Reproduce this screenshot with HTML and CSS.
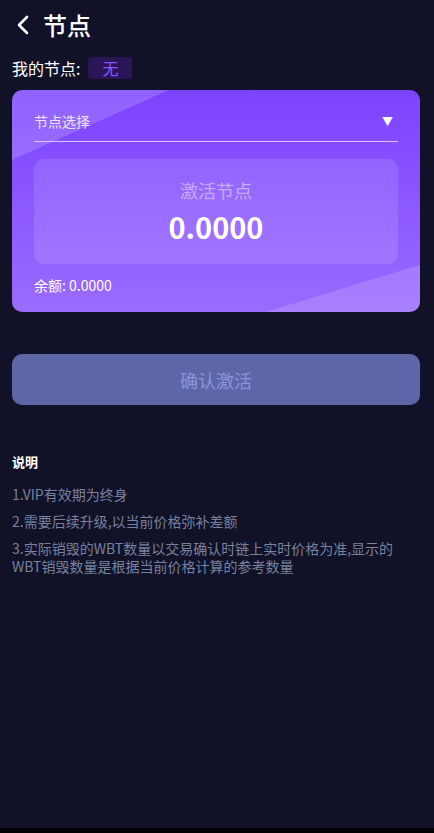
FILE: index.html
```html
<!DOCTYPE html>
<html lang="zh-CN">
<head>
    <meta charset="UTF-8">
    <meta name="viewport" content="width=device-width, initial-scale=1.0">
    <title>节点</title>
    <link rel="stylesheet" href="styles.css">
</head>
<body>
    <div class="page">
        <div class="header">
            <svg class="back" width="14" height="20" viewBox="0 0 14 20">
                <path d="M11 2 L3 10 L11 18" fill="none" stroke="#fff" stroke-width="2.6" stroke-linecap="round" stroke-linejoin="round"/>
            </svg>
            <h1>节点</h1>
        </div>

        <div class="my-node">
            <span>我的节点:</span>
            <span class="badge">无</span>
        </div>

        <div class="card">
            <div class="select">
                <span>节点选择</span>
                <span class="arrow">▼</span>
            </div>
            <div class="amount-box">
                <div class="amount-label">激活节点</div>
                <div class="amount">0.0000</div>
            </div>
            <div class="balance">余额: 0.0000</div>
        </div>

        <button class="confirm">确认激活</button>

        <div class="notes">
            <h3>说明</h3>
            <p>1.VIP有效期为终身</p>
            <p>2.需要后续升级,以当前价格弥补差额</p>
            <p>3.实际销毁的WBT数量以交易确认时链上实时价格为准,显示的WBT销毁数量是根据当前价格计算的参考数量</p>
        </div>
    </div>
    <div class="bottom-bar"></div>
</body>
</html>
```

FILE: styles.css
```css
html, body {
    margin: 0;
    padding: 0;
}
body {
    background: #111228;
    color: #fff;
    font-family: "Noto Sans CJK SC", "Liberation Sans", sans-serif;
    height: 833px;
    display: flex;
    flex-direction: column;
}
.page {
    flex: 1;
    padding: 0 14px 0 12px;
}
.header {
    display: flex;
    align-items: center;
    height: 50px;
}
.back {
    margin-left: 4px;
    margin-right: 13px;
}
h1 {
    margin: 0;
    font-size: 24px;
    font-weight: 500;
    line-height: 1;
}
.my-node {
    display: flex;
    align-items: center;
    gap: 8px;
    font-size: 16px;
    height: 36px;
    margin-bottom: 4px;
}
.badge {
    background: #2a1656;
    color: #8a55ff;
    border-radius: 4px;
    padding: 0 14px;
    line-height: 22px;
    font-size: 16px;
}
.card {
    border-radius: 10px;
    padding: 14px 22px 17px;
    background:
        linear-gradient(156deg, rgba(255,255,255,0.16) 17.3%, rgba(255,255,255,0) 17.3%),
        linear-gradient(163deg, rgba(255,255,255,0) 86.4%, rgba(255,255,255,0.14) 86.4%),
        linear-gradient(180deg, #7c43ff 0%, #9b6bff 100%);
}
.select {
    display: flex;
    justify-content: space-between;
    align-items: center;
    font-size: 14px;
    color: #ece4ff;
    height: 33px;
    padding-bottom: 4px;
    border-bottom: 1px solid #d6c6ff;
}
.arrow {
    font-size: 11px;
    color: #fff;
    margin-right: 5px;
}
.amount-box {
    margin-top: 17px;
    height: 105px;
    border-radius: 10px;
    background: rgba(255,255,255,0.12);
    display: flex;
    flex-direction: column;
    align-items: center;
    justify-content: center;
}
.amount-label {
    font-size: 18px;
    color: #c5acff;
    line-height: 24px;
    margin-bottom: 6px;
}
.amount {
    font-size: 29px;
    font-weight: bold;
    line-height: 36px;
    margin-bottom: 2px;
}
.balance {
    margin-top: 11px;
    font-size: 14px;
    line-height: 20px;
}
.confirm {
    display: block;
    width: 100%;
    height: 51px;
    margin-top: 42px;
    border: none;
    border-radius: 10px;
    background: #5d67a8;
    color: #8c94dc;
    font-family: inherit;
    font-size: 18px;
}
.notes {
    margin-top: 46px;
}
.notes h3 {
    margin: 0 0 12px;
    font-size: 13px;
    font-weight: bold;
    line-height: 22px;
}
.notes p {
    margin: 0 0 9px;
    font-size: 14px;
    line-height: 18px;
    color: #78819f;
}
.bottom-bar {
    height: 5px;
    background: #000;
}
```
